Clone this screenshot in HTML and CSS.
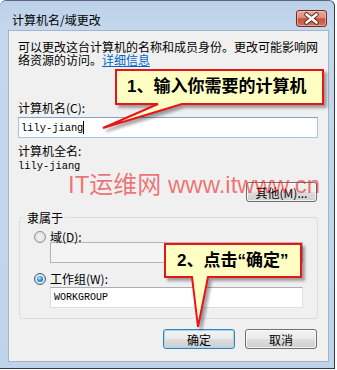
FILE: index.html
```html
<!DOCTYPE html>
<html lang="zh-CN">
<head>
<meta charset="utf-8">
<title>计算机名/域更改</title>
<link rel="stylesheet" href="styles.css">
</head>
<body>
<div class="window">
  <div class="titlebar">
    <span class="title">计算机名/域更改</span>
    <div class="close">
      <svg width="29" height="15" viewBox="0 0 29 15">
        <path d="M9.5 3.5 L19.5 11.5 M19.5 3.5 L9.5 11.5" stroke="#5a2a28" stroke-width="4.6" stroke-linecap="round" fill="none"/>
        <path d="M9.5 3.5 L19.5 11.5 M19.5 3.5 L9.5 11.5" stroke="#ffffff" stroke-width="2.6" stroke-linecap="round" fill="none"/>
      </svg>
    </div>
  </div>
  <div class="client">
    <p class="intro">可以更改这台计算机的名称和成员身份。更改可能影响网<br>络资源的访问。<a class="link" href="#">详细信息</a></p>
    <div class="label label-name">计算机名(C):</div>
    <div class="textbox focused"><span class="mono">lily-jiang</span><span class="caret"></span></div>
    <div class="label label-full">计算机全名:</div>
    <div class="mono fullname">lily-jiang</div>
    <div class="other-row"><div class="btn btn-other">其他(M)...</div></div>
    <fieldset class="group">
      <legend class="group-title">隶属于</legend>
      <div class="radio-row"><span class="radio"></span><span>域(D):</span></div>
      <div class="textbox disabled domain"></div>
      <div class="radio-row row-work"><span class="radio checked"></span><span>工作组(W):</span></div>
      <div class="textbox work"><span class="mono small">WORKGROUP</span></div>
    </fieldset>
    <div class="actions">
      <div class="btn btn-default">确定</div>
      <div class="btn">取消</div>
    </div>
  </div>
</div>

<svg class="callouts" width="337" height="370" viewBox="0 0 337 370">
  <path d="M116 70 H323 V104 H182 L103 128 L158 104 H116 Z" fill="#ffffc4" stroke="#e8141a" stroke-width="2"/>
  <path d="M165 244 H301 V277 H208 L198 327 L192 277 H165 Z" fill="#ffffc4" stroke="#e8141a" stroke-width="2"/>
</svg>
<div class="callout-text c1">1、输入你需要的计算机</div>
<div class="callout-text c2">2、点击“确定”</div>
<div class="watermark">IT运维网 www.itwww.cn</div>
</body>
</html>
```

FILE: styles.css
```css
html, body {
  margin: 0;
  padding: 0;
}
body {
  position: relative;
  width: 337px;
  height: 370px;
  overflow: hidden;
  background: #ffffff;
  font-family: "Noto Sans CJK SC", "Liberation Sans", sans-serif;
  font-size: 12px;
  color: #000;
}
.window {
  width: 335px;
  height: 369px;
  box-sizing: border-box;
  border-top: 1px solid #5a6a7e;
  border-right: 1px solid #333b45;
  border-bottom: 1px solid #333b45;
  border-radius: 6px 6px 0 0;
  background: linear-gradient(to bottom, #bcd1e9 0px, #c4d7ed 28px, #bfd4eb 100%);
  display: flex;
  flex-direction: column;
}
.titlebar {
  height: 29px;
  box-sizing: border-box;
  padding: 9px 7px 0 12px;
  display: flex;
  justify-content: space-between;
  align-items: flex-start;
  flex: none;
}
.title {
  line-height: 13px;
  margin-top: 3px;
}
.close {
  width: 31px;
  height: 17px;
  box-sizing: border-box;
  border: 1px solid #6b2b26;
  border-radius: 3px;
  background: linear-gradient(to bottom, #e9a998 0%, #dc8c78 45%, #c8523c 52%, #d0735d 100%);
  box-shadow: inset 0 0 0 1px rgba(255, 210, 200, 0.55);
  display: flex;
  align-items: center;
  justify-content: center;
}
.client {
  flex: 1;
  margin: 0 5px 6px 8px;
  border: 1px solid #a3b5ca;
  background: #f0f0f0;
  padding: 9px 10px 0 9px;
  display: flex;
  flex-direction: column;
}
.intro {
  margin: 0;
  line-height: 13px;
  white-space: nowrap;
}
.link {
  color: #0066cc;
  text-decoration: underline;
}
.label {
  line-height: 13px;
}
.label-name {
  margin-top: 35px;
}
.label-full {
  margin-top: 6px;
}
.mono {
  font-family: "Liberation Mono", "DejaVu Sans Mono", monospace;
  font-size: 10.4px;
}
.mono.small {
  font-size: 10px;
}
.textbox {
  height: 21px;
  box-sizing: border-box;
  border: 1px solid #dcdfe6;
  border-top-color: #abadb3;
  background: #ffffff;
  display: flex;
  align-items: center;
  padding-left: 2px;
}
.textbox.focused {
  margin-top: 3px;
  border-color: #a8c3de;
  border-top-color: #7fa3c8;
}
.caret {
  display: inline-block;
  width: 1px;
  height: 13px;
  background: #000;
  margin-left: 0;
}
.fullname {
  margin-top: 3px;
  line-height: 13px;
}
.other-row {
  margin-top: 9px;
  display: flex;
  justify-content: flex-end;
}
.btn {
  width: 72px;
  height: 20px;
  box-sizing: border-box;
  border: 1px solid #707070;
  border-radius: 3px;
  background: linear-gradient(to bottom, #f3f3f3 0%, #ebebeb 48%, #dddddd 52%, #cfcfcf 100%);
  box-shadow: inset 0 0 0 1px rgba(255, 255, 255, 0.7);
  display: flex;
  align-items: center;
  justify-content: center;
  line-height: 13px;
}
.btn-other {
  width: 71px;
  margin-right: 1px;
}
.btn-default {
  border-color: #3c7fb1;
  box-shadow: inset 0 0 0 1px #9fd9f6;
}
.group {
  margin: 9px 0 0 1px;
  padding: 6px 10px 10px 5px;
  border: 1px solid #d5dfe5;
  border-radius: 3px;
  min-width: 0;
}
.group-title {
  padding: 0 2px;
  line-height: 13px;
}
.radio-row {
  margin-left: 9px;
  display: flex;
  align-items: center;
  gap: 4px;
  line-height: 13px;
}
.row-work {
  margin-top: 9px;
}
.radio {
  width: 12px;
  height: 12px;
  box-sizing: border-box;
  border-radius: 50%;
  border: 1px solid #8e9297;
  background: radial-gradient(circle at 50% 50%, #f6f6f6 0%, #e4e4e4 55%, #cfcfcf 100%);
  display: flex;
  align-items: center;
  justify-content: center;
  flex: none;
}
.radio.checked {
  border-color: #3d5a78;
}
.radio.checked::after {
  content: "";
  width: 6px;
  height: 6px;
  border-radius: 50%;
  background: radial-gradient(circle at 40% 35%, #b5ecff 0%, #2f9be0 45%, #0e4f8f 100%);
}
.domain {
  margin: -1px 0 0 25px;
  width: 253px;
  background: #f4f4f4;
  border-color: #b5b5b5;
}
.work {
  margin: 2px 0 0 25px;
  width: 253px;
  padding-left: 3px;
}
.actions {
  margin-top: 10px;
  display: flex;
  justify-content: flex-end;
  gap: 10px;
  padding-right: 1px;
}
.callouts {
  position: absolute;
  left: 0;
  top: 0;
  pointer-events: none;
  filter: drop-shadow(3px 3px 1.5px rgba(0, 0, 0, 0.35));
}
.callout-text {
  position: absolute;
  font-family: "Liberation Sans", "Noto Sans CJK SC", sans-serif;
  font-weight: bold;
  font-size: 17px;
  line-height: 20px;
  white-space: nowrap;
  color: #000;
}
.c1 {
  left: 127px;
  top: 77px;
}
.c2 {
  left: 177px;
  top: 251px;
}
.watermark {
  position: absolute;
  left: 68px;
  top: 173px;
  font-family: "Liberation Sans", "Noto Sans CJK SC", sans-serif;
  font-size: 24px;
  line-height: 24px;
  white-space: nowrap;
  color: rgba(236, 30, 30, 0.6);
}
```
